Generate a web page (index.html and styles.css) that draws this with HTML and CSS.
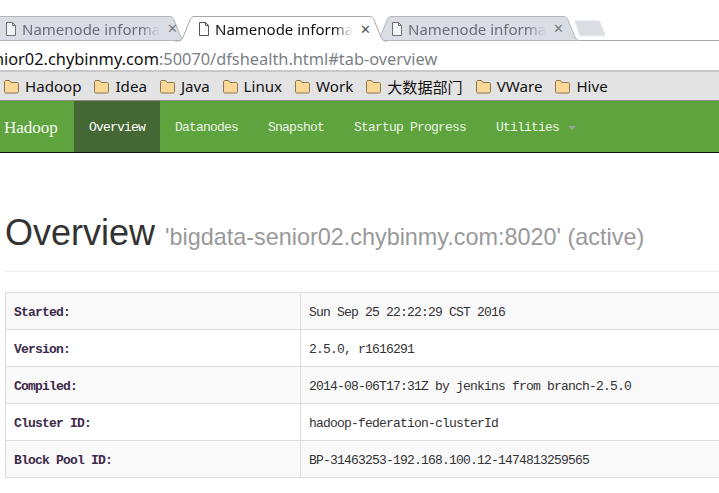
FILE: index.html
```html
<!DOCTYPE html>
<html lang="en">
<head>
<meta charset="utf-8">
<title>Namenode information</title>
<link rel="stylesheet" href="styles.css">
</head>
<body>
<div class="tabstrip">
  <div class="tab tab-bg tab-first">
    <svg class="tab-shape" width="200" height="25" viewBox="0 0 200 25"><path d="M-2 24.500H196C193 24.500 192 23 190.500 20L184 4C183 1.500 182 .5 179 .5H-2Z" fill="#dadde3" stroke="#b4b6ba"/></svg>
    <svg class="doc" width="12" height="14" viewBox="0 0 12 14"><path d="M1.500.5H7.500L10.500 3.500V13.500H1.500ZM7.500.5V3.500H10.500" fill="#f4f5f7" stroke="#6e7278"/></svg>
    <span class="tab-title">Namenode informa</span>
    <span class="close">✕</span>
  </div>
  <div class="tab tab-active">
    <svg class="tab-shape" width="212" height="26" viewBox="0 0 212 26"><path d="M0 25H3C6 25 7 23.500 8.500 20L15 4C16 1.500 17 .5 20 .5H194C197 .5 198 1.500 199 4L205.500 20C207 23.500 208 25 211 25H212" fill="#fff" stroke="#a8a8a8"/></svg>
    <svg class="doc" width="12" height="14" viewBox="0 0 12 14"><path d="M1.500.5H7.500L10.500 3.500V13.500H1.500ZM7.500.5V3.500H10.500" fill="#fff" stroke="#555"/></svg>
    <span class="tab-title">Namenode informa</span>
    <span class="close">✕</span>
  </div>
  <div class="tab tab-bg tab-last">
    <svg class="tab-shape" width="208" height="25" viewBox="0 0 208 25"><path d="M1 24.500C4 24.500 5 23 6.500 20L13 4C14 1.500 15 .5 18 .5H189C192 .5 193 1.500 194 4L200.500 20C202 23 203 24.500 206 24.500Z" fill="#dadde3" stroke="#b4b6ba"/></svg>
    <svg class="doc" width="12" height="14" viewBox="0 0 12 14"><path d="M1.500.5H7.500L10.500 3.500V13.500H1.500ZM7.500.5V3.500H10.500" fill="#f4f5f7" stroke="#6e7278"/></svg>
    <span class="tab-title">Namenode informa</span>
    <span class="close">✕</span>
  </div>
  <svg class="newtab" width="34" height="18" viewBox="0 0 34 18"><path d="M3 1.500C2 1.500 1.500 2 2 3L6 15C6.500 16.500 7 17 9 17H30C32 17 32.500 16 32 15L27 3C26.500 2 26 1.500 25 1.500Z" fill="#dadde3" stroke="#eceef1"/></svg>
</div>
<div class="urlbar"><span class="url"><span class="host">bigdata-senior02.chybinmy.com</span>:50070/dfshealth.html#tab-overview</span></div>
<div class="bookmarks">
  <span class="mark"><svg class="folder" width="17" height="15" viewBox="0 0 17 15"><path d="M1.500 3C1.500 2 2 1.500 3 1.500H6.500L8 3.500H14C15 3.500 15.500 4 15.500 5V12.500C15.500 13.500 15 14 14 14H3C2 14 1.500 13.500 1.500 12.500Z" fill="#fcd898" stroke="#8a7752"/></svg>Hadoop</span>
  <span class="mark"><svg class="folder" width="17" height="15" viewBox="0 0 17 15"><path d="M1.500 3C1.500 2 2 1.500 3 1.500H6.500L8 3.500H14C15 3.500 15.500 4 15.500 5V12.500C15.500 13.500 15 14 14 14H3C2 14 1.500 13.500 1.500 12.500Z" fill="#fcd898" stroke="#8a7752"/></svg>Idea</span>
  <span class="mark"><svg class="folder" width="17" height="15" viewBox="0 0 17 15"><path d="M1.500 3C1.500 2 2 1.500 3 1.500H6.500L8 3.500H14C15 3.500 15.500 4 15.500 5V12.500C15.500 13.500 15 14 14 14H3C2 14 1.500 13.500 1.500 12.500Z" fill="#fcd898" stroke="#8a7752"/></svg>Java</span>
  <span class="mark"><svg class="folder" width="17" height="15" viewBox="0 0 17 15"><path d="M1.500 3C1.500 2 2 1.500 3 1.500H6.500L8 3.500H14C15 3.500 15.500 4 15.500 5V12.500C15.500 13.500 15 14 14 14H3C2 14 1.500 13.500 1.500 12.500Z" fill="#fcd898" stroke="#8a7752"/></svg>Linux</span>
  <span class="mark"><svg class="folder" width="17" height="15" viewBox="0 0 17 15"><path d="M1.500 3C1.500 2 2 1.500 3 1.500H6.500L8 3.500H14C15 3.500 15.500 4 15.500 5V12.500C15.500 13.500 15 14 14 14H3C2 14 1.500 13.500 1.500 12.500Z" fill="#fcd898" stroke="#8a7752"/></svg>Work</span>
  <span class="mark"><svg class="folder" width="17" height="15" viewBox="0 0 17 15"><path d="M1.500 3C1.500 2 2 1.500 3 1.500H6.500L8 3.500H14C15 3.500 15.500 4 15.500 5V12.500C15.500 13.500 15 14 14 14H3C2 14 1.500 13.500 1.500 12.500Z" fill="#fcd898" stroke="#8a7752"/></svg>大数据部门</span>
  <span class="mark"><svg class="folder" width="17" height="15" viewBox="0 0 17 15"><path d="M1.500 3C1.500 2 2 1.500 3 1.500H6.500L8 3.500H14C15 3.500 15.500 4 15.500 5V12.500C15.500 13.500 15 14 14 14H3C2 14 1.500 13.500 1.500 12.500Z" fill="#fcd898" stroke="#8a7752"/></svg>VWare</span>
  <span class="mark"><svg class="folder" width="17" height="15" viewBox="0 0 17 15"><path d="M1.500 3C1.500 2 2 1.500 3 1.500H6.500L8 3.500H14C15 3.500 15.500 4 15.500 5V12.500C15.500 13.500 15 14 14 14H3C2 14 1.500 13.500 1.500 12.500Z" fill="#fcd898" stroke="#8a7752"/></svg>Hive</span>
</div>
<nav class="navbar">
  <a class="brand">Hadoop</a>
  <a class="nav-item nav-active">Overview</a>
  <a class="nav-item">Datanodes</a>
  <a class="nav-item">Snapshot</a>
  <a class="nav-item">Startup Progress</a>
  <a class="nav-item">Utilities <span class="caret"></span></a>
</nav>
<main class="page">
  <header class="page-header">
    <h1 class="title">Overview <small class="subtitle">'bigdata-senior02.chybinmy.com:8020' (active)</small></h1>
  </header>
  <table class="info">
    <tr><th>Started:</th><td>Sun Sep 25 22:22:29 CST 2016</td></tr>
    <tr><th>Version:</th><td>2.5.0, r1616291</td></tr>
    <tr><th>Compiled:</th><td>2014-08-06T17:31Z by jenkins from branch-2.5.0</td></tr>
    <tr><th>Cluster ID:</th><td>hadoop-federation-clusterId</td></tr>
    <tr><th>Block Pool ID:</th><td>BP-31463253-192.168.100.12-1474813259565</td></tr>
  </table>
</main>
</body>
</html>
```

FILE: styles.css
```css
* { box-sizing: border-box; }
html, body { margin: 0; padding: 0; height: 100%; overflow: hidden; background: #fff; }
body { width: 719px; height: 493px; font-family: "Liberation Sans", Arial, sans-serif; }

.tabstrip {
  height: 41px;
  padding-top: 16px;
  display: flex;
  border-bottom: 1px solid #a8a8a8;
  margin-left: -10px;
  position: relative;
}
.tab {
  width: 193px;
  height: 25px;
  position: relative;
  display: flex;
  align-items: center;
  font-family: "Noto Sans", sans-serif;
  font-size: 15px;
  padding-left: 15px;
  flex: none;
}
.tab-shape { position: absolute; left: -8px; top: 0; z-index: 0; }
.tab-first .tab-shape { left: 0; }
.tab-last .tab-shape { left: -2px; }
.tab > .doc, .tab > .tab-title, .tab > .close { position: relative; z-index: 2; }
.tab-active { z-index: 3; height: 26px; }
.tab-bg { color: #6a6e76; }
.tab-active { color: #111; }
.doc { flex: none; margin-right: 5px; }
.tab-title {
  width: 138px;
  white-space: nowrap;
  overflow: hidden;
  -webkit-mask-image: linear-gradient(to right, #000 118px, transparent 138px);
  mask-image: linear-gradient(to right, #000 118px, transparent 138px);
}
.close { font-size: 13px; margin-left: 7px; color: #7a7e84; font-family: "DejaVu Sans", sans-serif; font-weight: bold; }
.tab-active .close { color: #555; }
.newtab { flex: none; margin-left: 2px; margin-top: 3px; position: relative; left: 2px; }

.urlbar {
  height: 31px;
  border-bottom: 2px solid #c8c8c8;
  padding-top: 5px;
  overflow: hidden;
  font-family: "Noto Sans", sans-serif;
  font-size: 16.35px;
  line-height: 26px;
  white-space: nowrap;
  color: #7b7f85;
}
.url { display: block; margin-left: -87px; }
.host { color: #111; }

.bookmarks {
  height: 29px;
  background: #e3e3e3;
  border-bottom: 1px solid #8e8e8e;
  display: flex;
  align-items: center;
  padding-left: 3px;
  gap: 12px;
  font-family: "Noto Sans", "Noto Sans CJK SC", sans-serif;
  font-size: 15.1px;
  color: #111;
  white-space: nowrap;
}
.mark { display: flex; align-items: center; gap: 5px; }
.folder { flex: none; }

.navbar {
  height: 52px;
  background: #5fa33e;
  border-bottom: 1px solid #111;
  display: flex;
  color: #e9f3e3;
  font-family: "Liberation Mono", monospace;
  font-size: 13px;
  letter-spacing: -0.8px;
}
.brand {
  font-family: "Liberation Serif", serif;
  font-size: 17px;
  letter-spacing: 0;
  padding-top: 2px;
  line-height: 49px;
  width: 74px;
  padding-left: 4px;
  color: #f2f8ee;
}
.nav-item { padding: 2px 15px 0; line-height: 49px; }
.nav-active { background: #446733; color: #fff; }
.caret {
  display: inline-block;
  width: 0;
  height: 0;
  margin-left: 2px;
  vertical-align: middle;
  border-top: 4px solid #9aa394;
  border-left: 4px solid transparent;
  border-right: 4px solid transparent;
}

.page { padding-left: 5px; width: 760px; }
.page-header {
  height: 119px;
  padding-top: 60px;
  border-bottom: 1px solid #eee;
}
.title {
  margin: 0;
  font-size: 36px;
  font-weight: 400;
  line-height: 40px;
  color: #333;
  white-space: nowrap;
}
.subtitle { font-size: 23.4px; color: #999; font-weight: 400; }

.info {
  margin-top: 20px;
  width: 755px;
  table-layout: fixed;
  border-collapse: collapse;
  font-family: "Liberation Mono", monospace;
  font-size: 13px;
  letter-spacing: -0.8px;
  color: #333;
}
.info th, .info td {
  height: 37px;
  border: 1px solid #ddd;
  padding: 2px 8px 0;
  text-align: left;
  white-space: nowrap;
}
.info th { width: 295px; font-weight: 700; color: #3c2a4a; }
.info tr:nth-child(odd) { background: #f9f9f9; }
```
